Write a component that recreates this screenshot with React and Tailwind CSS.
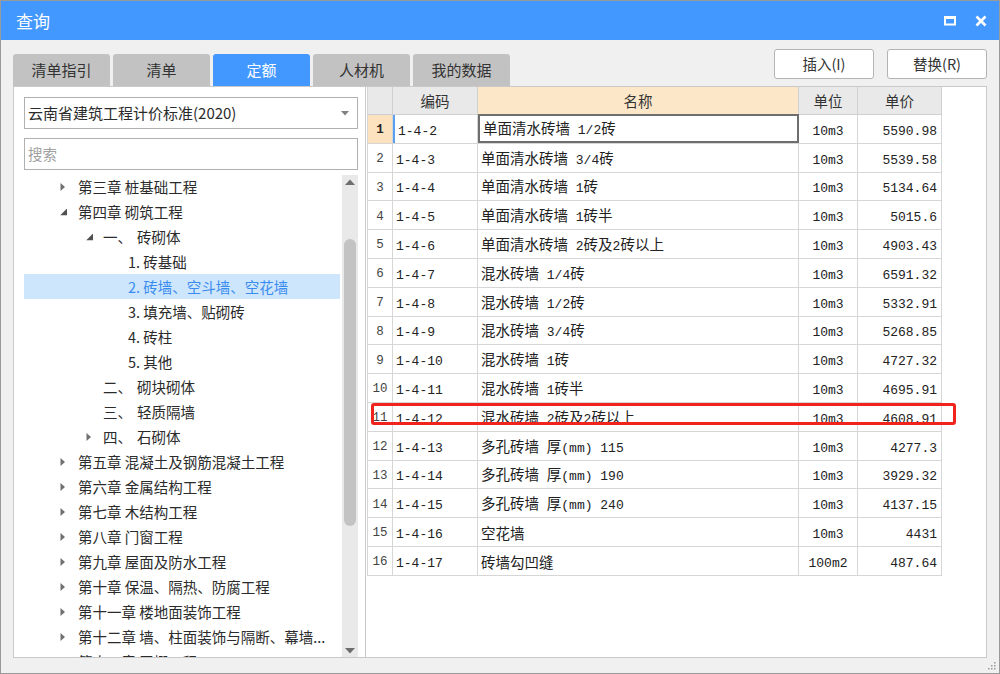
import React from "react";

const UI = { fontFamily: '"Noto Sans CJK SC", "Noto Sans", sans-serif' };

const tabs = ["清单指引", "清单", "定额", "人材机", "我的数据"];

const tree = [
  { lv: 0, arrow: "right", text: "第三章 桩基础工程" },
  { lv: 0, arrow: "down", text: "第四章 砌筑工程" },
  { lv: 1, arrow: "down", num: "一、", text: "砖砌体" },
  { lv: 2, text: "1. 砖基础" },
  { lv: 2, text: "2. 砖墙、空斗墙、空花墙", active: true },
  { lv: 2, text: "3. 填充墙、贴砌砖" },
  { lv: 2, text: "4. 砖柱" },
  { lv: 2, text: "5. 其他" },
  { lv: 1, num: "二、", text: "砌块砌体" },
  { lv: 1, num: "三、", text: "轻质隔墙" },
  { lv: 1, arrow: "right", num: "四、", text: "石砌体" },
  { lv: 0, arrow: "right", text: "第五章 混凝土及钢筋混凝土工程" },
  { lv: 0, arrow: "right", text: "第六章 金属结构工程" },
  { lv: 0, arrow: "right", text: "第七章 木结构工程" },
  { lv: 0, arrow: "right", text: "第八章 门窗工程" },
  { lv: 0, arrow: "right", text: "第九章 屋面及防水工程" },
  { lv: 0, arrow: "right", text: "第十章 保温、隔热、防腐工程" },
  { lv: 0, arrow: "right", text: "第十一章 楼地面装饰工程" },
  { lv: 0, arrow: "right", text: "第十二章 墙、柱面装饰与隔断、幕墙..." },
  { lv: 0, arrow: "right", text: "第十三章 天棚工程" },
];

const rows = [
  ["1-4-2", "单面清水砖墙 1/2砖", "10m3", "5590.98"],
  ["1-4-3", "单面清水砖墙 3/4砖", "10m3", "5539.58"],
  ["1-4-4", "单面清水砖墙 1砖", "10m3", "5134.64"],
  ["1-4-5", "单面清水砖墙 1砖半", "10m3", "5015.6"],
  ["1-4-6", "单面清水砖墙 2砖及2砖以上", "10m3", "4903.43"],
  ["1-4-7", "混水砖墙 1/4砖", "10m3", "6591.32"],
  ["1-4-8", "混水砖墙 1/2砖", "10m3", "5332.91"],
  ["1-4-9", "混水砖墙 3/4砖", "10m3", "5268.85"],
  ["1-4-10", "混水砖墙 1砖", "10m3", "4727.32"],
  ["1-4-11", "混水砖墙 1砖半", "10m3", "4695.91"],
  ["1-4-12", "混水砖墙 2砖及2砖以上", "10m3", "4608.91"],
  ["1-4-13", "多孔砖墙 厚(mm) 115", "10m3", "4277.3"],
  ["1-4-14", "多孔砖墙 厚(mm) 190", "10m3", "3929.32"],
  ["1-4-15", "多孔砖墙 厚(mm) 240", "10m3", "4137.15"],
  ["1-4-16", "空花墙", "10m3", "4431"],
  ["1-4-17", "砖墙勾凹缝", "100m2", "487.64"],
];

const MONO = { fontFamily: '"Liberation Mono", monospace' };

// SimSun-ish look: ascii runs in a mono face, CJK in a sans face
const Mixed = ({ s }) => (
  <span className="whitespace-pre leading-none">
    {s.split(/([\x00-\x7f]+)/).map((part, i) =>
      /^[\x00-\x7f]+$/.test(part) ? (
        <span key={i} className="text-[13px]" style={MONO}>
          {part}
        </span>
      ) : (
        <span key={i} className="text-[14.5px]">{part}</span>
      )
    )}
  </span>
);

const Arrow = ({ dir }) =>
  dir === "right" ? (
    <svg width="6" height="10" viewBox="0 0 6 10" className="block">
      <path d="M0.5 1 L5 5 L0.5 9 Z" fill="#707070" />
    </svg>
  ) : (
    <svg width="7" height="7" viewBox="0 0 7 7" className="block">
      <path d="M7 0 L7 7 L0 7 Z" fill="#505050" />
    </svg>
  );

function TreeRow({ item }) {
  const arrowLeft = item.lv === 0 ? 36 : 62;
  return (
    <div
      className={`relative h-[25px] flex items-center text-[14.5px] whitespace-nowrap ${
        item.active ? "bg-[#cde6fb] text-[#3a8cf0]" : "text-[#2b2b2b]"
      }`}
    >
      {item.arrow && (
        <span className="absolute top-1/2 -translate-y-1/2" style={{ left: arrowLeft }}>
          <Arrow dir={item.arrow} />
        </span>
      )}
      {item.lv === 0 && <span className="pl-[54px]">{item.text}</span>}
      {item.lv === 1 && (
        <span className="pl-[79px] flex">
          <span className="w-[34px]">{item.num}</span>
          <span>{item.text}</span>
        </span>
      )}
      {item.lv === 2 && <span className="pl-[104px]">{item.text}</span>}
    </div>
  );
}

export default function App() {
  return (
    <div className="w-[1000px] h-[674px] bg-[#f0f0f0] border border-[#9a9a9a] flex flex-col overflow-hidden" style={UI}>
      {/* title bar */}
      <div className="h-[39px] bg-[#4398ff] flex items-center pl-[15px] pr-[12px] text-white shrink-0">
        <span className="text-[17px]">查询</span>
        <div className="ml-auto flex items-center gap-[19px]">
          <svg width="12" height="10" viewBox="0 0 12 10">
            <rect x="1" y="1.5" width="10" height="7" fill="none" stroke="#fff" strokeWidth="2" />
            <rect x="0" y="0" width="12" height="3" fill="#fff" />
          </svg>
          <svg width="12" height="12" viewBox="0 0 12 12">
            <path d="M1.5 1.5 L10.5 10.5 M10.5 1.5 L1.5 10.5" stroke="#fff" strokeWidth="2.6" />
          </svg>
        </div>
      </div>

      {/* tabs + actions */}
      <div className="h-[46px] px-[12px] flex items-start shrink-0">
        <div className="pt-[14px] flex gap-[3px]">
          {tabs.map((t) => (
            <div
              key={t}
              className={`w-[97px] h-[32px] rounded-t-[3px] flex items-center justify-center text-[15px] ${
                t === "定额" ? "bg-[#4398ff] text-white" : "bg-[#c2c2c2] text-[#333]"
              }`}
            >
              {t}
            </div>
          ))}
        </div>
        <div className="ml-auto pt-[9px] flex gap-[13px]">
          {["插入(I)", "替换(R)"].map((b) => (
            <div
              key={b}
              className="w-[100px] h-[30px] bg-white border border-[#b4b4b4] rounded-[3px] flex items-center justify-center text-[14.5px] text-[#333]"
            >
              {b}
            </div>
          ))}
        </div>
      </div>

      {/* main */}
      <div className="h-[572px] px-[12px] flex shrink-0">
        {/* left panel */}
        <div className="w-[353px] bg-white border border-[#c9c9c9] pl-[10px] pr-[7px] pt-[10px] flex flex-col">
          <div className="h-[32px] border border-[#b0b0b0] flex items-center pl-[3px] pr-[8px] text-[15px] text-[#2b2b2b]">
            <span>云南省建筑工程计价标准(2020)</span>
            <svg width="8" height="5" viewBox="0 0 8 5" className="ml-auto">
              <path d="M0 0 L8 0 L4 4.5 Z" fill="#808080" />
            </svg>
          </div>
          <div className="mt-[9px] h-[32px] border border-[#b0b0b0] flex items-center pl-[3px] text-[14.5px] text-[#a0a0a0]">
            搜索
          </div>
          <div className="mt-[5px] flex-1 flex min-h-0">
            <div className="flex-1 overflow-hidden -mt-[1px]">
              {tree.map((it, i) => (
                <TreeRow key={i} item={it} />
              ))}
            </div>
            <div className="w-[16px] ml-[2px] bg-[#e9e9e9] flex flex-col items-center">
              <svg width="10" height="6" viewBox="0 0 10 6" className="mt-[4px]">
                <path d="M0 6 L10 6 L5 0.5 Z" fill="#6e6e6e" />
              </svg>
              <div className="mt-[54px] w-[12px] h-[287px] rounded-full bg-[#c3c3c3]" />
              <svg width="10" height="6" viewBox="0 0 10 6" className="mt-auto mb-[3px]">
                <path d="M0 0 L10 0 L5 5.5 Z" fill="#6e6e6e" />
              </svg>
            </div>
          </div>
        </div>

        {/* right panel */}
        <div className="relative flex-1 bg-white border border-[#c9c9c9] border-l-0 text-[#222]">
          <div className="w-[575px] border-l border-[#d6d6d6] ml-[1px]">
            {/* header */}
            <div className="h-[28px] flex text-[14.5px] text-[#333] border-b border-[#d0d0d0]">
              <div className="w-[25px] bg-[#e9e9e9] border-r border-[#d0d0d0]" />
              <div className="w-[85px] bg-[#e9e9e9] border-r border-[#d0d0d0] flex items-center justify-center">编码</div>
              <div className="w-[321px] bg-[#fde7c9] border-r border-[#d0d0d0] flex items-center justify-center">名称</div>
              <div className="w-[59px] bg-[#e9e9e9] border-r border-[#d0d0d0] flex items-center justify-center">单位</div>
              <div className="w-[84px] bg-[#e9e9e9] border-r border-[#d0d0d0] flex items-center justify-center">单价</div>
            </div>
            {rows.map((r, i) => {
              const sel = i === 0;
              return (
                <div key={i} className="h-[28.8px] flex border-b border-[#d6d6d6]">
                  <div
                    className={`w-[25px] border-r border-[#d6d6d6] flex items-center justify-center pt-[3px] leading-none text-[12.5px] ${
                      sel ? "bg-[#fde2c0] font-bold text-[#222]" : "text-[#444]"
                    }`}
                    style={MONO}
                  >
                    {i + 1}
                  </div>
                  <div className={`w-[85px] border-r border-[#d6d6d6] flex items-center pl-[3px] ${sel ? "border-l-2 border-l-[#5aa0f0] pl-[1px]" : ""}`}>
                    <Mixed s={r[0]} />
                  </div>
                  <div className={`w-[321px] flex items-center pl-[3px] ${sel ? "border-2 border-[#6e6e6e] -mt-[1px]" : "border-r border-[#d6d6d6]"}`}>
                    <Mixed s={r[1]} />
                  </div>
                  <div className="w-[59px] border-r border-[#d6d6d6] flex items-center justify-center">
                    <Mixed s={r[2]} />
                  </div>
                  <div className="w-[84px] border-r border-[#d6d6d6] flex items-center justify-end pr-[4px]">
                    <Mixed s={r[3]} />
                  </div>
                </div>
              );
            })}
          </div>
          {/* red highlight */}
          <div className="absolute left-[5px] top-[316px] w-[585px] h-[22px] border-[3px] border-[#f0241c] rounded-[3px]" />
        </div>
      </div>

      {/* bottom strip */}
      <div className="flex-1 flex items-end justify-end pr-[3px] pb-[3px]">
        <svg width="8" height="8" viewBox="0 0 8 8">
          <g fill="#9a9a9a">
            <rect x="6" y="0" width="1.5" height="1.5" />
            <rect x="3" y="3" width="1.5" height="1.5" />
            <rect x="6" y="3" width="1.5" height="1.5" />
            <rect x="0" y="6" width="1.5" height="1.5" />
            <rect x="3" y="6" width="1.5" height="1.5" />
            <rect x="6" y="6" width="1.5" height="1.5" />
          </g>
        </svg>
      </div>
    </div>
  );
}
